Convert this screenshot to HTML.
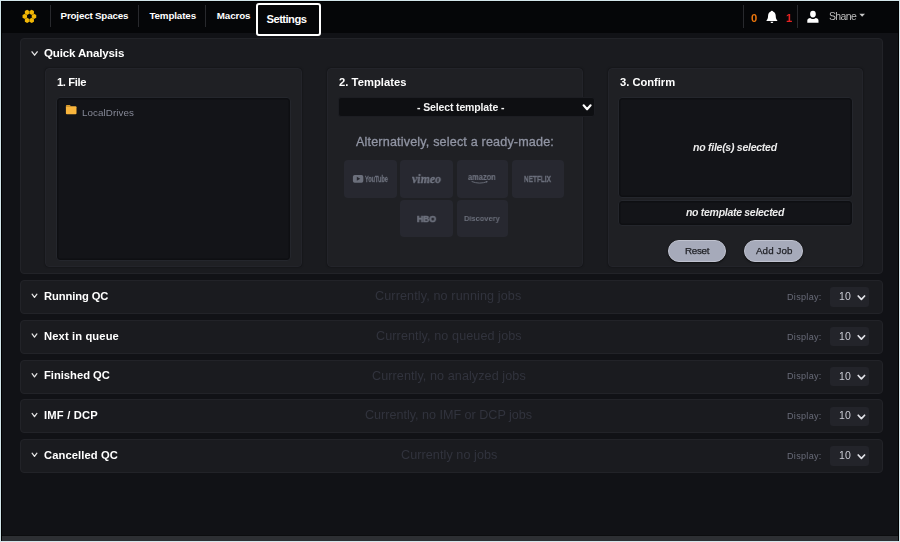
<!DOCTYPE html>
<html lang="en">
<head>
<meta charset="utf-8">
<title>Quick Analysis</title>
<style>
html,body{margin:0;padding:0}
body{width:900px;height:542px;background:#d3e5ea;position:relative;overflow:hidden;font-family:"Liberation Sans",Arial,sans-serif}
.a{position:absolute;box-sizing:border-box}
.t{position:absolute;white-space:nowrap;line-height:normal}
.g{will-change:transform}
#frame{left:1px;top:1px;width:898px;height:540px;background:#000}
#nav{left:2px;top:2px;width:896px;height:31px;background:#050608}
#main{left:2px;top:33px;width:896px;height:503px;background:#111216}
#foot{left:2px;top:536px;width:896px;height:5px;background:#2d2f33}
.sep{width:1px;background:#28292d;top:5px;height:22px}
.panel{background:#1a1b1f;border:1px solid #222328;border-radius:4px}
.card{background:#1f2024;border:1px solid #23242a;border-radius:4px;box-shadow:0 0 2px rgba(0,0,0,.55)}
.box{background:#131418;border:1px solid #24262c;border-radius:4px;box-shadow:inset 0 0 0 1.5px #0e0f12}
.tile{background:#272830;border-radius:4px;width:52px;height:37.5px}
.sel{background:#23242a;border-radius:3px}
.btn{background:#a6aaba;border:1px solid #bfc2cf;border-radius:12px;box-shadow:0 1px 2px rgba(0,0,0,.6)}
#focus{left:256px;top:3px;width:65px;height:32.5px;border:2px solid #fff;border-radius:3px;background:#050608}
</style>
</head>
<body>
<div class="a" id="frame"></div>
<div class="a" id="nav"></div>
<div class="a" id="main"></div>
<div class="a" id="foot"></div>
<div class="a" style="left:2px;top:535px;width:896px;height:1px;background:#0c0d0f"></div>

<div class="a sep" style="left:50px"></div>
<div class="a sep" style="left:138px"></div>
<div class="a sep" style="left:205px"></div>
<div class="a sep" style="left:743px;top:5px;height:23px"></div>
<div class="a sep" style="left:797px;top:5px;height:23px"></div>
<div class="a" id="focus"></div>

<!-- panels -->
<div class="a panel" style="left:20px;top:38px;width:863px;height:235.5px"></div>
<div class="a panel" style="left:20px;top:280px;width:863px;height:34px"></div>
<div class="a panel" style="left:20px;top:319.75px;width:863px;height:34px"></div>
<div class="a panel" style="left:20px;top:359.5px;width:863px;height:34px"></div>
<div class="a panel" style="left:20px;top:399.25px;width:863px;height:34px"></div>
<div class="a panel" style="left:20px;top:439px;width:863px;height:34px"></div>

<!-- cards -->
<div class="a card" style="left:45.3px;top:68.3px;width:256.6px;height:198.6px"></div>
<div class="a card" style="left:327.3px;top:68.3px;width:255.5px;height:198.7px"></div>
<div class="a card" style="left:608.3px;top:68.3px;width:255px;height:198.7px"></div>

<!-- boxes -->
<div class="a box" style="left:56px;top:96.6px;width:235.3px;height:164.8px"></div>
<div class="a box" style="left:618.2px;top:96.6px;width:234.4px;height:101px"></div>
<div class="a box" style="left:618.2px;top:200.3px;width:234.4px;height:26.1px"></div>
<div class="a" style="left:337.5px;top:97.2px;width:257.5px;height:20.2px;background:#0e0f12;border:1px solid #1c1d22;border-radius:3px"></div>

<!-- tiles -->
<div class="a tile" style="left:344.1px;top:160px;width:52.8px;height:37.7px"></div>
<div class="a tile" style="left:400.3px;top:160px;width:52.7px;height:37.7px"></div>
<div class="a tile" style="left:456.6px;top:160px;width:51.4px;height:37.7px"></div>
<div class="a tile" style="left:511.8px;top:160px;width:52px;height:37.7px"></div>
<div class="a tile" style="left:400.3px;top:200px;width:52.7px;height:37.2px"></div>
<div class="a tile" style="left:456.6px;top:200px;width:51.4px;height:37.2px"></div>

<!-- buttons -->
<div class="a btn" style="left:667.5px;top:239.6px;width:58.8px;height:22.6px"></div>
<div class="a btn" style="left:744.2px;top:239.6px;width:58.8px;height:22.6px"></div>

<!-- display selects -->
<div class="a sel" style="left:830px;top:287.3px;width:38.7px;height:19.4px"></div>
<div class="a sel" style="left:830px;top:327px;width:38.7px;height:19.4px"></div>
<div class="a sel" style="left:830px;top:366.8px;width:38.7px;height:19.4px"></div>
<div class="a sel" style="left:830px;top:406.5px;width:38.7px;height:19.4px"></div>
<div class="a sel" style="left:830px;top:446.3px;width:38.7px;height:19.4px"></div>

<!--ICONS_START-->
<svg class="a" style="left:0;top:0" width="900" height="542" viewBox="0 0 900 542">
<path d="M34.00,19.00 L31.75,17.70 L31.75,15.10 L34.00,13.80 L36.25,15.10 L36.25,17.70ZM31.70,22.98 L29.45,21.68 L29.45,19.08 L31.70,17.78 L33.95,19.08 L33.95,21.68ZM27.10,22.98 L24.85,21.68 L24.85,19.08 L27.10,17.78 L29.35,19.08 L29.35,21.68ZM24.80,19.00 L22.55,17.70 L22.55,15.10 L24.80,13.80 L27.05,15.10 L27.05,17.70ZM27.10,15.02 L24.85,13.72 L24.85,11.12 L27.10,9.82 L29.35,11.12 L29.35,13.72ZM31.70,15.02 L29.45,13.72 L29.45,11.12 L31.70,9.82 L33.95,11.12 L33.95,13.72Z" fill="#f2b705"/>
<path id="lg2" d="M31.13 17.40 L35.98 20.20M29.40 18.40 L29.40 24.00M27.67 17.40 L22.82 20.20M27.67 15.40 L22.82 12.60M29.40 14.40 L29.40 8.80M31.13 15.40 L35.98 12.60" stroke="#050608" stroke-width="0.5" stroke-opacity="0.5" fill="none"/>
<g fill="#ffffff"><circle cx="771.9" cy="11.9" r="1.15"/><path d="M771.9 11.6 C774.6 11.6 775.6 13.6 775.7 15.6 C775.8 18.2 776.2 19.6 777.3 20.4 L777.3 21.1 L766.5 21.1 L766.5 20.4 C767.6 19.6 768 18.2 768.1 15.6 C768.2 13.6 769.2 11.6 771.9 11.6Z"/><path d="M770.5 21.7 L773.3 21.7 C773.3 23.4 770.5 23.4 770.5 21.7Z"/></g>
<g fill="#ffffff"><ellipse cx="812.95" cy="14.1" rx="2.85" ry="3.4"/><path d="M807.3 22.8 L807.3 20.6 C807.3 18.9 808.6 18.1 810.4 17.9 C811.2 19.3 814.7 19.3 815.5 17.9 C817.3 18.1 818.5 18.9 818.5 20.6 L818.5 22.8Z"/></g>
<path d="M859.3 13.8 L865 13.8 L862.15 16.8Z" fill="#c8c8c8"/>
<path d="M32.00 51.80 L34.60 55.20 L37.20 51.80" fill="none" stroke="#e4e4e4" stroke-width="1.3" stroke-linecap="round" stroke-linejoin="round"/>
<path d="M32.10 294.20 L34.50 297.40 L36.90 294.20" fill="none" stroke="#e4e4e4" stroke-width="1.25" stroke-linecap="round" stroke-linejoin="round"/>
<path d="M32.10 333.95 L34.50 337.15 L36.90 333.95" fill="none" stroke="#e4e4e4" stroke-width="1.25" stroke-linecap="round" stroke-linejoin="round"/>
<path d="M32.10 373.70 L34.50 376.90 L36.90 373.70" fill="none" stroke="#e4e4e4" stroke-width="1.25" stroke-linecap="round" stroke-linejoin="round"/>
<path d="M32.10 413.45 L34.50 416.65 L36.90 413.45" fill="none" stroke="#e4e4e4" stroke-width="1.25" stroke-linecap="round" stroke-linejoin="round"/>
<path d="M32.10 453.20 L34.50 456.40 L36.90 453.20" fill="none" stroke="#e4e4e4" stroke-width="1.25" stroke-linecap="round" stroke-linejoin="round"/>
<path d="M583.60 105.30 L587.10 109.30 L590.60 105.30" fill="none" stroke="#ffffff" stroke-width="2.1" stroke-linecap="round" stroke-linejoin="round"/>
<path d="M858.20 296.00 L861.40 299.40 L864.60 296.00" fill="none" stroke="#e2e3e8" stroke-width="1.7" stroke-linecap="round" stroke-linejoin="round"/>
<path d="M858.20 335.75 L861.40 339.15 L864.60 335.75" fill="none" stroke="#e2e3e8" stroke-width="1.7" stroke-linecap="round" stroke-linejoin="round"/>
<path d="M858.20 375.50 L861.40 378.90 L864.60 375.50" fill="none" stroke="#e2e3e8" stroke-width="1.7" stroke-linecap="round" stroke-linejoin="round"/>
<path d="M858.20 415.25 L861.40 418.65 L864.60 415.25" fill="none" stroke="#e2e3e8" stroke-width="1.7" stroke-linecap="round" stroke-linejoin="round"/>
<path d="M858.20 455.00 L861.40 458.40 L864.60 455.00" fill="none" stroke="#e2e3e8" stroke-width="1.7" stroke-linecap="round" stroke-linejoin="round"/>
<path d="M65.9 105.9 Q65.9 104.9 66.9 104.9 L69.8 104.9 L71 106.3 L65.9 106.3Z" fill="#d99a2b"/>
<path d="M65.9 106.2 L75.5 106.2 Q76.5 106.2 76.5 107.2 L76.5 113.2 Q76.5 114.2 75.5 114.2 L66.9 114.2 Q65.9 114.2 65.9 113.2Z" fill="#f9b53c"/>
<g opacity="1"><rect x="352.9" y="174.9" width="10.4" height="7.8" rx="1.8" fill="#6b6f7b"/><path d="M356.8 176.8 L360.3 178.8 L356.8 180.8Z" fill="#272830"/></g>
<path d="M472 181.6 Q479.5 184.6 486.8 181.8" fill="none" stroke="#6b6f7b" stroke-width="0.9" stroke-linecap="round"/><path d="M485.6 181 L487.6 181.2 L486.9 183Z" fill="#6b6f7b"/>
</svg>
<!--ICONS_END-->
<span class="t" id="n1" style="left:60.60px;top:10.00px;font-size:9.8px;font-weight:bold;font-style:normal;color:#ffffff;letter-spacing:-0.189px;">Project Spaces</span>
<span class="t" id="n2" style="left:149.40px;top:10.00px;font-size:9.8px;font-weight:bold;font-style:normal;color:#ffffff;letter-spacing:-0.130px;">Templates</span>
<span class="t" id="n3" style="left:216.70px;top:10.00px;font-size:9.8px;font-weight:bold;font-style:normal;color:#ffffff;letter-spacing:-0.084px;">Macros</span>
<span class="t" id="n4" style="left:266.50px;top:13.00px;font-size:11.2px;font-weight:bold;font-style:normal;color:#ffffff;letter-spacing:-0.529px;">Settings</span>
<span class="t g" id="n5" style="left:751.00px;top:13.00px;font-size:10.2px;font-weight:bold;font-style:normal;color:#ec760c;letter-spacing:0.000px;transform:scaleX(1.1);transform-origin:0 50%">0</span>
<span class="t g" id="n6" style="left:786.20px;top:13.00px;font-size:10.2px;font-weight:bold;font-style:normal;color:#e52222;letter-spacing:0.000px;transform:scaleX(1.1);transform-origin:0 50%">1</span>
<span class="t g" id="n7" style="left:829.00px;top:10.00px;font-size:10.5px;font-weight:normal;font-style:normal;color:#bdbdbd;letter-spacing:-0.640px;">Shane</span>
<span class="t g" id="q0" style="left:44.00px;top:46.00px;font-size:11.6px;font-weight:bold;font-style:normal;color:#ffffff;letter-spacing:-0.181px;">Quick Analysis</span>
<span class="t g" id="c1" style="left:57.10px;top:76.00px;font-size:11.2px;font-weight:bold;font-style:normal;color:#ffffff;letter-spacing:-0.380px;">1. File</span>
<span class="t g" id="c2" style="left:338.50px;top:76.00px;font-size:11.2px;font-weight:bold;font-style:normal;color:#ffffff;letter-spacing:0.053px;">2. Templates</span>
<span class="t g" id="c3" style="left:619.50px;top:76.00px;font-size:11.2px;font-weight:bold;font-style:normal;color:#ffffff;letter-spacing:-0.021px;">3. Confirm</span>
<span class="t g" id="ld" style="left:82.00px;top:107.00px;font-size:9.8px;font-weight:normal;font-style:normal;color:#858896;letter-spacing:0.071px;">LocalDrives</span>
<span class="t g" id="st" style="left:417.30px;top:101.00px;font-size:10.5px;font-weight:bold;font-style:normal;color:#f4f4f4;letter-spacing:-0.137px;">- Select template -</span>
<span class="t g" id="al" style="left:355.80px;top:135.00px;font-size:12.6px;font-weight:normal;font-style:normal;color:#9195a4;letter-spacing:0.165px;-webkit-text-stroke:0.3px #9195a4">Alternatively, select a ready-made:</span>
<span class="t g" id="nf" style="left:693.30px;top:141.00px;font-size:10.5px;font-weight:bold;font-style:italic;color:#ececec;letter-spacing:-0.255px;">no file(s) selected</span>
<span class="t g" id="nt" style="left:686.40px;top:206.00px;font-size:10.5px;font-weight:bold;font-style:italic;color:#ececec;letter-spacing:-0.293px;">no template selected</span>
<span class="t g" id="b1" style="left:685.00px;top:245.00px;font-size:9.8px;font-weight:normal;font-style:normal;color:#1e1f24;letter-spacing:-0.275px;-webkit-text-stroke:0.25px #1e1f24">Reset</span>
<span class="t g" id="b2" style="left:755.80px;top:245.00px;font-size:9.8px;font-weight:normal;font-style:normal;color:#1e1f24;letter-spacing:0.090px;-webkit-text-stroke:0.25px #1e1f24">Add Job</span>
<span class="t g" id="r1" style="left:44.00px;top:290.00px;font-size:11.2px;font-weight:bold;font-style:normal;color:#ffffff;letter-spacing:-0.102px;">Running QC</span>
<span class="t g" id="r2" style="left:44.00px;top:330.00px;font-size:11.2px;font-weight:bold;font-style:normal;color:#ffffff;letter-spacing:0.123px;">Next in queue</span>
<span class="t g" id="r3" style="left:44.00px;top:369.00px;font-size:11.2px;font-weight:bold;font-style:normal;color:#ffffff;letter-spacing:-0.005px;">Finished QC</span>
<span class="t g" id="r4" style="left:44.00px;top:409.00px;font-size:11.2px;font-weight:bold;font-style:normal;color:#ffffff;letter-spacing:0.202px;">IMF / DCP</span>
<span class="t g" id="r5" style="left:44.00px;top:449.00px;font-size:11.2px;font-weight:bold;font-style:normal;color:#ffffff;letter-spacing:0.099px;">Cancelled QC</span>
<span class="t g" id="m1" style="left:375.40px;top:289.00px;font-size:12.6px;font-weight:normal;font-style:normal;color:#31333d;letter-spacing:0.120px;">Currently, no running jobs</span>
<span class="t g" id="m2" style="left:375.70px;top:329.00px;font-size:12.6px;font-weight:normal;font-style:normal;color:#31333d;letter-spacing:0.099px;">Currently, no queued jobs</span>
<span class="t g" id="m3" style="left:371.70px;top:369.00px;font-size:12.6px;font-weight:normal;font-style:normal;color:#31333d;letter-spacing:0.077px;">Currently, no analyzed jobs</span>
<span class="t g" id="m4" style="left:365.00px;top:408.00px;font-size:12.6px;font-weight:normal;font-style:normal;color:#31333d;letter-spacing:-0.015px;">Currently, no IMF or DCP jobs</span>
<span class="t g" id="m5" style="left:400.70px;top:448.00px;font-size:12.6px;font-weight:normal;font-style:normal;color:#31333d;letter-spacing:0.073px;">Currently no jobs</span>
<span class="t g" id="d0" style="left:786.90px;top:292.00px;font-size:9.1px;font-weight:normal;font-style:normal;color:#686b78;letter-spacing:0.290px;">Display:</span>
<span class="t g" id="v0" style="left:839.00px;top:290.00px;font-size:10.5px;font-weight:normal;font-style:normal;color:#c9cad3;letter-spacing:0.228px;">10</span>
<span class="t g" id="d1" style="left:786.90px;top:332.00px;font-size:9.1px;font-weight:normal;font-style:normal;color:#686b78;letter-spacing:0.290px;">Display:</span>
<span class="t g" id="v1" style="left:839.00px;top:330.00px;font-size:10.5px;font-weight:normal;font-style:normal;color:#c9cad3;letter-spacing:0.228px;">10</span>
<span class="t g" id="d2" style="left:786.90px;top:371.00px;font-size:9.1px;font-weight:normal;font-style:normal;color:#686b78;letter-spacing:0.290px;">Display:</span>
<span class="t g" id="v2" style="left:839.00px;top:370.00px;font-size:10.5px;font-weight:normal;font-style:normal;color:#c9cad3;letter-spacing:0.228px;">10</span>
<span class="t g" id="d3" style="left:786.90px;top:411.00px;font-size:9.1px;font-weight:normal;font-style:normal;color:#686b78;letter-spacing:0.290px;">Display:</span>
<span class="t g" id="v3" style="left:839.00px;top:409.00px;font-size:10.5px;font-weight:normal;font-style:normal;color:#c9cad3;letter-spacing:0.228px;">10</span>
<span class="t g" id="d4" style="left:786.90px;top:451.00px;font-size:9.1px;font-weight:normal;font-style:normal;color:#686b78;letter-spacing:0.290px;">Display:</span>
<span class="t g" id="v4" style="left:839.00px;top:449.00px;font-size:10.5px;font-weight:normal;font-style:normal;color:#c9cad3;letter-spacing:0.228px;">10</span>
<span class="t g" id="yt" style="left:365.00px;top:173.00px;font-size:9.4px;font-weight:bold;font-style:normal;color:#6b6f7b;font-family:'Liberation Sans',sans-serif;transform-origin:0 0;transform:scaleX(0.591);-webkit-text-stroke:0.3px #6b6f7b">YouTube</span>
<span class="t g" id="vm" style="left:412.30px;top:171.00px;font-size:13px;font-weight:bold;font-style:italic;color:#727683;font-family:'Liberation Serif',serif;transform-origin:0 0;transform:scaleX(0.912);-webkit-text-stroke:0.3px #727683">vimeo</span>
<span class="t g" id="am" style="left:467.70px;top:171.00px;font-size:9.6px;font-weight:bold;font-style:normal;color:#6b6f7b;font-family:'Liberation Sans',sans-serif;transform-origin:0 0;transform:scaleX(0.778);-webkit-text-stroke:0.2px #6b6f7b">amazon</span>
<span class="t g" id="nx" style="left:524.30px;top:174.00px;font-size:9.2px;font-weight:bold;font-style:normal;color:#6b6f7b;font-family:'Liberation Sans',sans-serif;transform-origin:0 0;transform:scaleX(0.702);-webkit-text-stroke:0.3px #6b6f7b">NETFLIX</span>
<span class="t g" id="hb" style="left:416.90px;top:213.00px;font-size:9.8px;font-weight:bold;font-style:normal;color:#6b6f7b;font-family:'Liberation Sans',sans-serif;transform-origin:0 0;transform:scaleX(0.872);-webkit-text-stroke:0.7px #6b6f7b">HBO</span>
<span class="t g" id="dc" style="left:463.70px;top:214.00px;font-size:8.1px;font-weight:bold;font-style:normal;color:#6b6f7b;font-family:'Liberation Sans',sans-serif;transform-origin:0 0;transform:scaleX(0.924);">Discovery</span>
</body>
</html>
